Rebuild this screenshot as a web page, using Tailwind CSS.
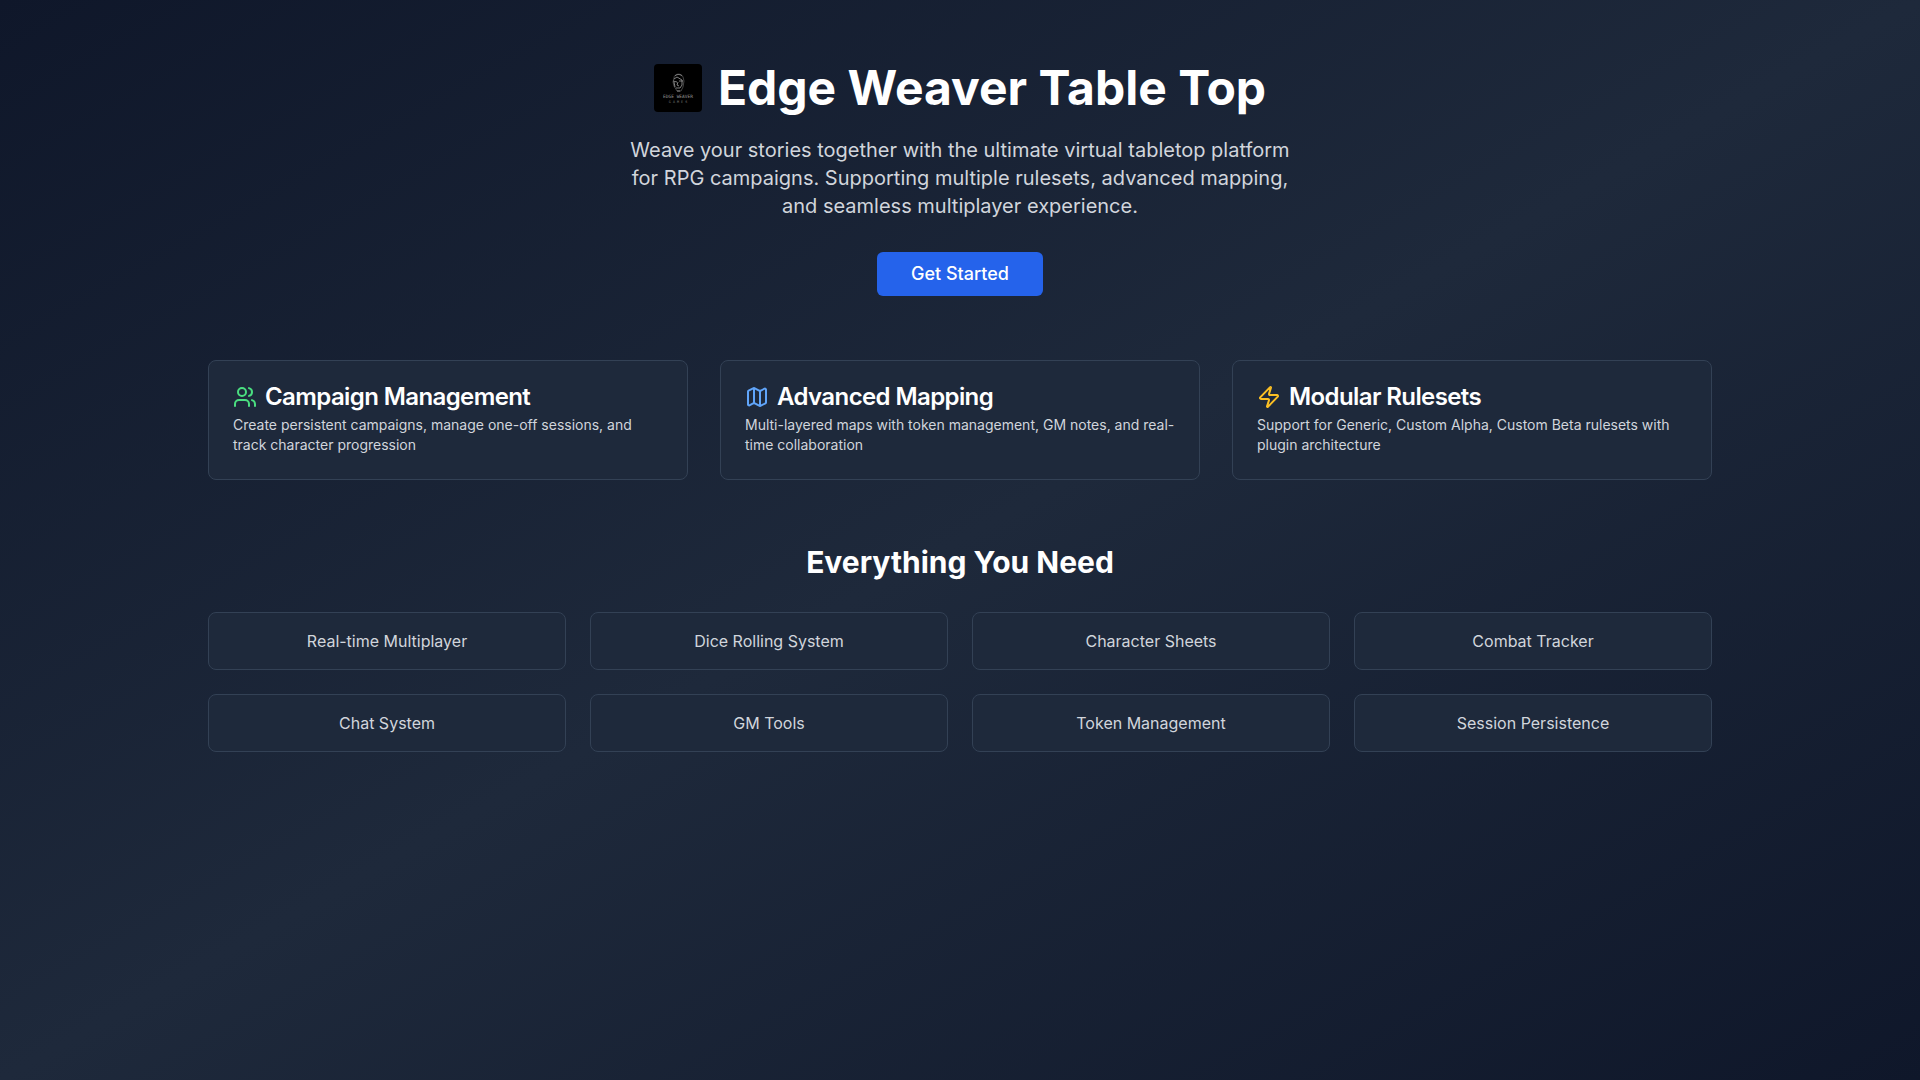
<!DOCTYPE html>
<html lang="en">
<head>
<meta charset="utf-8">
<meta name="viewport" content="width=device-width, initial-scale=1">
<title>Edge Weaver Table Top</title>
<script src="https://cdn.jsdelivr.net/npm/@tailwindcss/browser@4"></script>
</head>
<body class="font-['Inter',sans-serif] text-white">
<div class="min-h-screen bg-[linear-gradient(to_bottom_right,#0f172a,#1e293b,#0f172a)]">
  <div class="max-w-[1536px] mx-auto px-4 py-16">
    <header class="text-center mb-16">
      <div class="flex items-center justify-center gap-4 mb-6">
        <svg class="size-12 rounded" viewBox="0 0 48 48" role="img" aria-label="Edge Weaver Games">
          <rect width="48" height="48" fill="#000"/>
          <g fill="none" stroke="#a0a0a0" stroke-width=".8">
            <path d="M20 14c0-5 8-5 9-1l1 4-1 6-2 4h-4l-3-5-1-4z" stroke="#555"/>
            <path d="M21 12c2-2 5-2 7 0M20 15l3-2 5 3M19 17l4 1M25 17h4M24 18l-1 3 2 1M28 16v5l-2 3M20 18l1 5M22 24h4M23 27h3"/>
          </g>
          <text x="24" y="34" text-anchor="middle" font-family="DejaVu Sans Mono, monospace" font-size="4.5" fill="#999">EDGE WEAVER</text>
          <text x="24" y="39" text-anchor="middle" font-family="DejaVu Sans Mono, monospace" font-size="3.4" fill="#777">G A M E S</text>
        </svg>
        <h1 class="text-5xl font-bold">Edge Weaver Table Top</h1>
      </div>
      <p class="text-xl leading-7 text-gray-300 max-w-2xl mx-auto mb-8">Weave your stories together with the ultimate virtual tabletop platform for RPG campaigns. Supporting multiple rulesets, advanced mapping, and seamless multiplayer experience.</p>
      <button type="button" class="h-11 min-w-[166px] px-8 rounded-md bg-[#2563eb] text-lg font-medium">Get Started</button>
    </header>

    <section class="grid grid-cols-3 gap-8 mb-16">
      <article class="flex flex-col gap-1.5 rounded-lg border border-[#334155] bg-[#1e293b] p-6">
        <h2 class="flex items-center gap-2 text-2xl leading-6 font-semibold tracking-tight">
          <svg class="size-6 text-[#4ade80]" viewBox="0 0 24 24" fill="none" stroke="currentColor" stroke-width="2" stroke-linecap="round" stroke-linejoin="round" aria-hidden="true"><path d="M16 21v-2a4 4 0 0 0-4-4H6a4 4 0 0 0-4 4v2"/><circle cx="9" cy="7" r="4"/><path d="M22 21v-2a4 4 0 0 0-3-3.87"/><path d="M16 3.13a4 4 0 0 1 0 7.75"/></svg>
          Campaign Management
        </h2>
        <p class="text-sm text-gray-300">Create persistent campaigns, manage one-off sessions, and track character progression</p>
      </article>
      <article class="flex flex-col gap-1.5 rounded-lg border border-[#334155] bg-[#1e293b] p-6">
        <h2 class="flex items-center gap-2 text-2xl leading-6 font-semibold tracking-tight">
          <svg class="size-6 text-[#60a5fa]" viewBox="0 0 24 24" fill="none" stroke="currentColor" stroke-width="2" stroke-linecap="round" stroke-linejoin="round" aria-hidden="true"><path d="M14.106 5.553a2 2 0 0 0 1.788 0l3.659-1.83A1 1 0 0 1 21 4.619v12.764a1 1 0 0 1-.553.894l-4.553 2.277a2 2 0 0 1-1.788 0l-4.212-2.106a2 2 0 0 0-1.788 0l-3.659 1.83A1 1 0 0 1 3 19.381V6.618a1 1 0 0 1 .553-.894l4.553-2.277a2 2 0 0 1 1.788 0z"/><path d="M15 5.764v15"/><path d="M9 3.236v15"/></svg>
          Advanced Mapping
        </h2>
        <p class="text-sm text-gray-300">Multi-layered maps with token management, GM notes, and real-time collaboration</p>
      </article>
      <article class="flex flex-col gap-1.5 rounded-lg border border-[#334155] bg-[#1e293b] p-6">
        <h2 class="flex items-center gap-2 text-2xl leading-6 font-semibold tracking-tight">
          <svg class="size-6 text-[#fbbf24]" viewBox="0 0 24 24" fill="none" stroke="currentColor" stroke-width="2" stroke-linecap="round" stroke-linejoin="round" aria-hidden="true"><path d="M4 14a1 1 0 0 1-.78-1.63l9.9-10.2a.5.5 0 0 1 .86.46l-1.92 6.02A1 1 0 0 0 13 10h7a1 1 0 0 1 .78 1.63l-9.9 10.2a.5.5 0 0 1-.86-.46l1.92-6.02A1 1 0 0 0 11 14z"/></svg>
          Modular Rulesets
        </h2>
        <p class="text-sm text-gray-300">Support for Generic, Custom Alpha, Custom Beta rulesets with plugin architecture</p>
      </article>
    </section>

    <section>
      <h2 class="text-3xl font-bold text-center mb-8">Everything You Need</h2>
      <ul class="grid grid-cols-4 gap-6 text-center text-gray-300">
        <li class="rounded-lg border border-[#334155] bg-[#1e293b] p-4">Real-time Multiplayer</li>
        <li class="rounded-lg border border-[#334155] bg-[#1e293b] p-4">Dice Rolling System</li>
        <li class="rounded-lg border border-[#334155] bg-[#1e293b] p-4">Character Sheets</li>
        <li class="rounded-lg border border-[#334155] bg-[#1e293b] p-4">Combat Tracker</li>
        <li class="rounded-lg border border-[#334155] bg-[#1e293b] p-4">Chat System</li>
        <li class="rounded-lg border border-[#334155] bg-[#1e293b] p-4">GM Tools</li>
        <li class="rounded-lg border border-[#334155] bg-[#1e293b] p-4">Token Management</li>
        <li class="rounded-lg border border-[#334155] bg-[#1e293b] p-4">Session Persistence</li>
      </ul>
    </section>
  </div>
</div>
</body>
</html>
